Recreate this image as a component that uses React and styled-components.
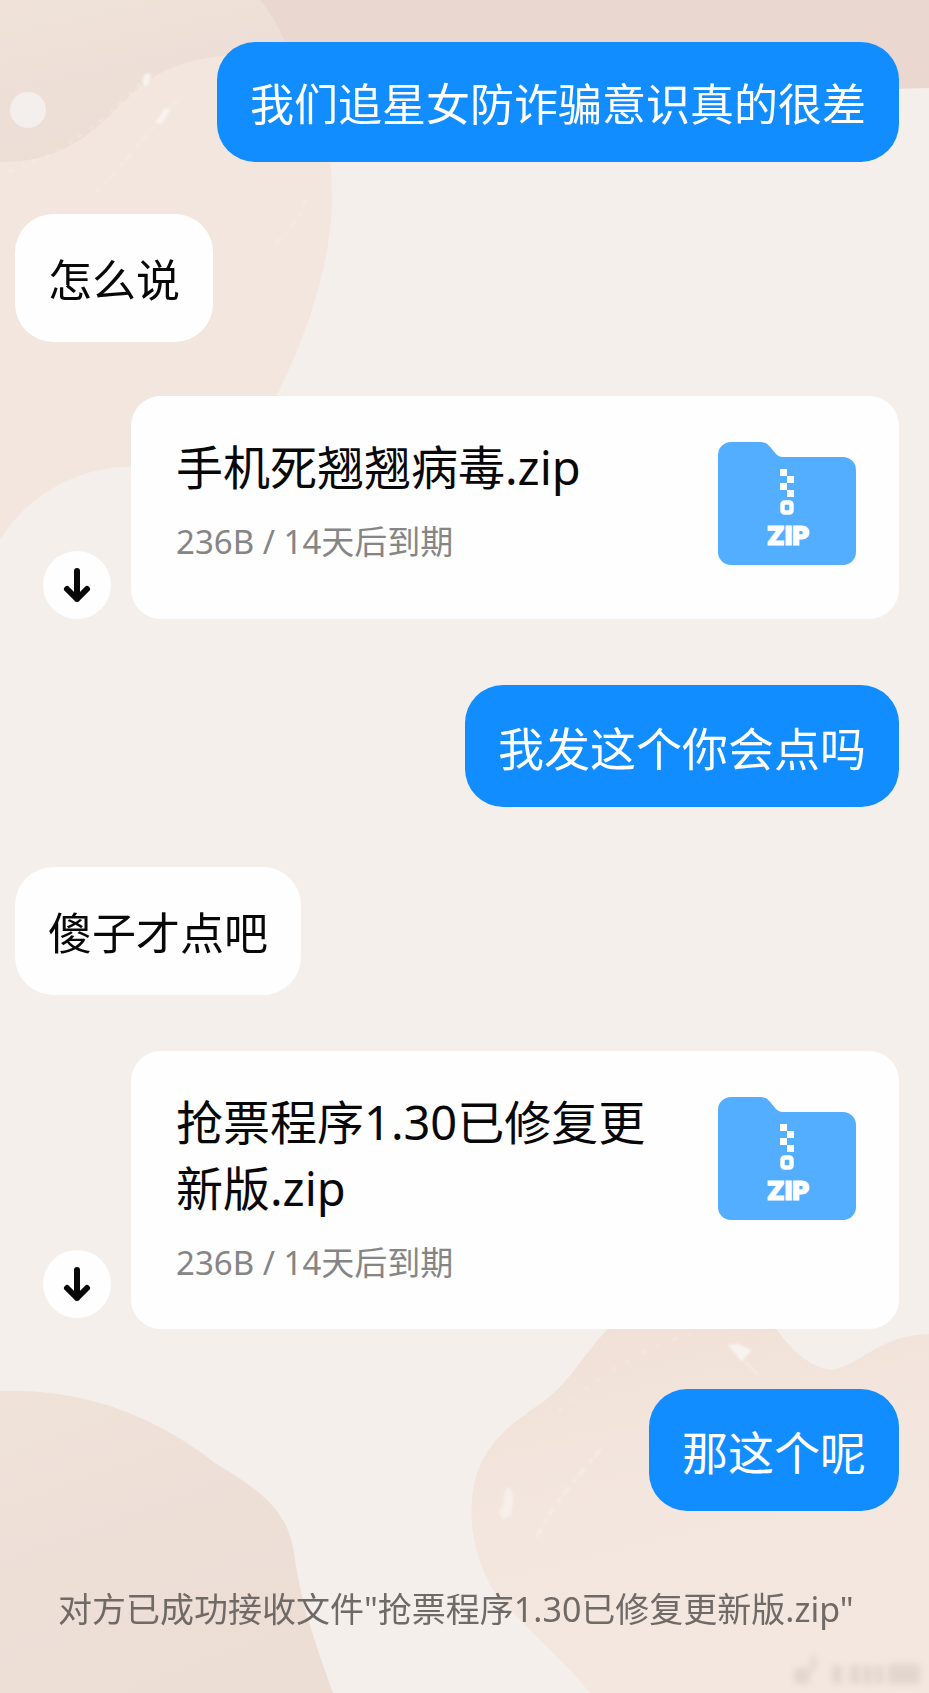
import styled, { createGlobalStyle } from "styled-components";

const GlobalStyle = createGlobalStyle`
  *,
  *::before,
  *::after {
    box-sizing: border-box;
  }

  body {
    margin: 0;
    background: #f4efeb;
    font-family: "Noto Sans", "Noto Sans CJK SC", sans-serif;
  }
`;

const Page = styled.main`
  position: relative;
  min-height: 100vh;
  padding: 42px 30px 60px 15px;
  overflow: hidden;
`;

const Wallpaper = styled.svg`
  position: absolute;
  inset: 0;
  width: 100%;
  height: 100%;
`;

const Thread = styled.ul`
  position: relative;
  display: flex;
  flex-direction: column;
  margin: 0;
  padding: 0;
  list-style: none;
`;

const Row = styled.li`
  display: flex;
  align-items: flex-end;
  justify-content: ${(props) => (props.$mine ? "flex-end" : "flex-start")};
  margin-bottom: ${(props) => props.$gap}px;
`;

const Bubble = styled.p`
  margin: 0;
  padding: ${(props) => (props.$mine ? "33px 33px 29px" : "37px 33px 33px")};
  border-radius: 38px;
  background: ${(props) => (props.$mine ? "#128dff" : "#fefefe")};
  color: ${(props) => (props.$mine ? "#fff" : "#080808")};
  font-size: ${(props) => (props.$large ? 46 : 44)}px;
  line-height: ${(props) => (props.$large ? 60 : 58)}px;
`;

const DownloadButton = styled.button`
  flex: none;
  display: grid;
  place-items: center;
  width: 68px;
  height: 68px;
  margin: 0 20px ${(props) => (props.$raised ? 11 : 0)}px 28px;
  padding: 0;
  border: 0;
  border-radius: 50%;
  background: #fefefe;
  cursor: pointer;
`;

const FileCard = styled.article`
  flex: 1;
  display: flex;
  align-items: flex-start;
  gap: 60px;
  min-height: 223px;
  padding: 38px 43px 44px 45px;
  border-radius: 30px;
  background: #fefefe;
`;

const FileInfo = styled.div`
  flex: 1;
`;

const FileName = styled.h2`
  margin: 0 0 20px;
  color: #080808;
  font-size: 47px;
  font-weight: 400;
  line-height: 66px;
`;

const FileMeta = styled.p`
  margin: 0;
  color: #858585;
  font-size: 33px;
  line-height: 44px;
`;

const Folder = styled.svg`
  flex: none;
  width: 138px;
  height: 123px;
  margin-top: 8px;
`;

const Notice = styled.p`
  position: relative;
  margin: 0;
  padding-left: 43px;
  color: #706a67;
  font-size: 34px;
  line-height: 44px;
`;

const messages = [
  { id: 1, mine: true, text: "我们追星女防诈骗意识真的很差", gap: 52 },
  { id: 2, text: "怎么说", gap: 54 },
  { id: 3, file: "手机死翘翘病毒.zip", meta: "236B / 14天后到期", gap: 66 },
  { id: 4, mine: true, large: true, text: "我发这个你会点吗", gap: 60 },
  { id: 5, text: "傻子才点吧", gap: 56 },
  {
    id: 6,
    file: "抢票程序1.30已修复更新版.zip",
    meta: "236B / 14天后到期",
    raised: true,
    gap: 60,
  },
  { id: 7, mine: true, large: true, text: "那这个呢", gap: 76 },
];

function ChatWallpaper() {
  return (
    <Wallpaper
      viewBox="0 0 929 1693"
      preserveAspectRatio="none"
      aria-hidden="true"
    >
      <defs>
        <filter id="smudge" x="-20%" y="-20%" width="140%" height="140%">
          <feGaussianBlur stdDeviation="3" />
        </filter>
        <filter id="soft">
          <feGaussianBlur stdDeviation="1" />
        </filter>
        <linearGradient id="sand" x1="0" y1="0" x2="0.4" y2="1">
          <stop offset="0" stopColor="#efe2d9" />
          <stop offset="1" stopColor="#ecddd5" />
        </linearGradient>
        <linearGradient id="peach" x1="0" y1="0" x2="0.3" y2="1">
          <stop offset="0" stopColor="#f0dfd6" />
          <stop offset="0.5" stopColor="#f3e6de" />
          <stop offset="1" stopColor="#f4e7df" />
        </linearGradient>
      </defs>
      <path
        d="M0 0H270C310 65 333 120 332 205C329 275 302 345 277 395C250 455 170 467 118 467C70 472 25 498 0 540Z"
        fill="#f3e6de"
      />
      <path
        d="M0 0H260C277 18 286 36 292 58C240 50 190 56 155 76C115 98 90 163 0 162Z"
        fill="url(#sand)"
      />
      <path
        d="M260 0H929V88C880 89 830 91 780 95L300 80C290 50 278 22 260 0Z"
        fill="#ead7cf"
      />
      <circle cx="28" cy="110" r="18" fill="#f4efec" />
      <path
        d="M0 1391C90 1388 160 1420 215 1463C260 1490 288 1510 294 1553C302 1610 318 1650 333 1693H0Z"
        fill="url(#sand)"
      />
      <path
        d="M590 1693C560 1655 515 1620 490 1585C472 1550 470 1520 472 1500C476 1450 505 1428 537 1406C570 1385 585 1350 612 1325L770 1320C790 1350 810 1368 832 1370C860 1365 880 1335 929 1334V1693Z"
        fill="url(#peach)"
      />
      <g
        fill="none"
        stroke="#f9f3ee"
        strokeLinecap="round"
        opacity="0.5"
        filter="url(#soft)"
      >
        <path d="M140 84C95 130 55 158 0 174" strokeWidth="2" strokeDasharray="3 9 2 12" />
        <path d="M178 100C145 132 130 160 98 190" strokeWidth="2" strokeDasharray="7 5 3 9" />
        <path d="M305 200C298 222 285 236 270 248" strokeWidth="2" strokeDasharray="6 8 2 7" />
        <path d="M600 1450C580 1475 555 1500 535 1540" strokeWidth="3" strokeDasharray="7 6 3 9" />
        <path d="M690 1335C640 1345 580 1390 550 1420" strokeWidth="2" strokeDasharray="1 13 3 17" />
        <path d="M745 1362L758 1374" strokeWidth="2" />
      </g>
      <g fill="#faf6f3" opacity="0.85" filter="url(#soft)">
        <path d="M145 74l6-1-2 10-4 4-3-6z" />
        <path d="M165 108l5 2-8 14-7-1z" />
        <path d="M728 1345l10-1 14 6-7 7-3 5z" />
        <path d="M505 1489l5-2 4 12-3 16-8 5-5-8 5-8z" opacity="0.6" />
      </g>
      <g fill="#c9bdb6" opacity="0.4" filter="url(#smudge)">
        <rect x="794" y="1668" width="16" height="16" />
        <rect x="811" y="1655" width="5" height="16" />
        <rect x="832" y="1665" width="10" height="19" />
        <rect x="850" y="1665" width="10" height="19" />
        <rect x="863" y="1665" width="9" height="19" />
        <rect x="875" y="1665" width="8" height="19" />
        <rect x="888" y="1664" width="32" height="20" />
      </g>
    </Wallpaper>
  );
}

function ZipFolder() {
  return (
    <Folder viewBox="0 0 138 123" role="img" aria-label="ZIP">
      <path
        d="M13 0H42C47 0 50 2 53 6L58 12C60 14 62 15 65 15H125A13 13 0 0 1 138 28V110A13 13 0 0 1 125 123H13A13 13 0 0 1 0 110V13A13 13 0 0 1 13 0Z"
        fill="#53aeff"
      />
      <g fill="#fff">
        <rect x="62" y="27" width="7" height="7" />
        <rect x="69" y="34" width="7" height="7" />
        <rect x="62" y="41" width="7" height="7" />
        <rect x="69" y="48" width="7" height="7" />
      </g>
      <rect
        x="64.5"
        y="60.5"
        width="9"
        height="10"
        rx="2"
        fill="none"
        stroke="#fff"
        strokeWidth="4.5"
      />
      <text
        x="70"
        y="103"
        textAnchor="middle"
        fill="#fff"
        stroke="#fff"
        strokeWidth="1"
        fontFamily="Inter, sans-serif"
        fontSize="26"
        fontWeight="900"
      >
        ZIP
      </text>
    </Folder>
  );
}

function ArrowDown() {
  return (
    <svg width="68" height="68" viewBox="0 0 68 68" aria-hidden="true">
      <path
        d="M34 20V48M24 38L34 48L44 38"
        fill="none"
        stroke="#080808"
        strokeWidth="6"
        strokeLinecap="round"
        strokeLinejoin="round"
      />
    </svg>
  );
}

function FileMessage({ message }) {
  return (
    <>
      <DownloadButton
        type="button"
        aria-label="下载"
        $raised={message.raised}
      >
        <ArrowDown />
      </DownloadButton>
      <FileCard>
        <FileInfo>
          <FileName>{message.file}</FileName>
          <FileMeta>{message.meta}</FileMeta>
        </FileInfo>
        <ZipFolder />
      </FileCard>
    </>
  );
}

export default function App() {
  return (
    <Page lang="zh-CN">
      <GlobalStyle />
      <ChatWallpaper />
      <Thread>
        {messages.map((message) => (
          <Row key={message.id} $mine={message.mine} $gap={message.gap}>
            {message.file ? (
              <FileMessage message={message} />
            ) : (
              <Bubble $mine={message.mine} $large={message.large}>
                {message.text}
              </Bubble>
            )}
          </Row>
        ))}
      </Thread>
      <Notice>对方已成功接收文件"抢票程序1.30已修复更新版.zip"</Notice>
    </Page>
  );
}
